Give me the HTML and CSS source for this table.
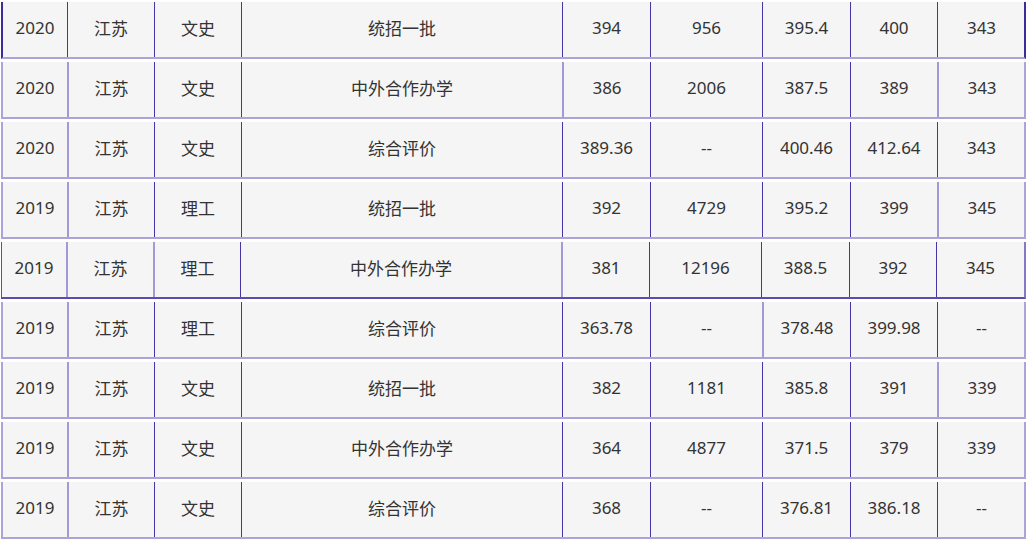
FILE: index.html
```html
<!DOCTYPE html>
<html lang="zh">
<head>
<meta charset="utf-8">
<title>录取分数</title>
<link rel="stylesheet" href="styles.css">
</head>
<body>
<div class="table">
  <div class="row dark-edge">
    <div class="c">2020</div><div class="c">江苏</div><div class="c">文史</div><div class="c">统招一批</div><div class="c">394</div><div class="c">956</div><div class="c">395.4</div><div class="c">400</div><div class="c">343</div>
  </div>
  <div class="row">
    <div class="c">2020</div><div class="c light">江苏</div><div class="c">文史</div><div class="c">中外合作办学</div><div class="c light">386</div><div class="c">2006</div><div class="c">387.5</div><div class="c">389</div><div class="c light">343</div>
  </div>
  <div class="row">
    <div class="c">2020</div><div class="c light">江苏</div><div class="c">文史</div><div class="c">综合评价</div><div class="c">389.36</div><div class="c">--</div><div class="c">400.46</div><div class="c">412.64</div><div class="c">343</div>
  </div>
  <div class="row">
    <div class="c">2019</div><div class="c light">江苏</div><div class="c">理工</div><div class="c">统招一批</div><div class="c">392</div><div class="c">4729</div><div class="c">395.2</div><div class="c">399</div><div class="c light">345</div>
  </div>
  <div class="row thin-edge">
    <div class="c">2019</div><div class="c light">江苏</div><div class="c light">理工</div><div class="c">中外合作办学</div><div class="c light">381</div><div class="c">12196</div><div class="c">388.5</div><div class="c">392</div><div class="c">345</div>
  </div>
  <div class="row">
    <div class="c">2019</div><div class="c light">江苏</div><div class="c">理工</div><div class="c">综合评价</div><div class="c">363.78</div><div class="c">--</div><div class="c light">378.48</div><div class="c">399.98</div><div class="c">--</div>
  </div>
  <div class="row">
    <div class="c">2019</div><div class="c light">江苏</div><div class="c">文史</div><div class="c">统招一批</div><div class="c">382</div><div class="c">1181</div><div class="c">385.8</div><div class="c">391</div><div class="c light">339</div>
  </div>
  <div class="row">
    <div class="c">2019</div><div class="c light">江苏</div><div class="c">文史</div><div class="c">中外合作办学</div><div class="c">364</div><div class="c">4877</div><div class="c">371.5</div><div class="c">379</div><div class="c">339</div>
  </div>
  <div class="row">
    <div class="c">2019</div><div class="c light">江苏</div><div class="c">文史</div><div class="c">综合评价</div><div class="c">368</div><div class="c">--</div><div class="c">376.81</div><div class="c">386.18</div><div class="c">--</div>
  </div>
</div>
</body>
</html>
```

FILE: styles.css
```css
html, body {
  margin: 0;
  padding: 0;
  background: #ffffff;
}

body {
  font-family: "Noto Sans", "Noto Sans CJK SC", sans-serif;
  font-size: 17px;
  color: #333333;
}

.table {
  display: flex;
  flex-direction: column;
  gap: 3px;
  padding: 2px 0 0 1px;
  width: 1025px;
}

.row {
  display: grid;
  grid-template-columns: 64px 87px 87px 321px 88px 112px 88px 87px 88px;
  height: 57px;
  background: #f5f5f5;
  border-left: 2px solid #aca3d8;
  border-right: 2px solid #aca3d8;
  border-bottom: 2px solid #aca3d8;
  box-sizing: border-box;
}

.row.dark-edge {
  border-left: 2px solid #3b2c9c;
  border-right: 2px solid #3b2c9c;
}

.row.thin-edge {
  border-left: 1px solid #5a4cb0;
  border-right: 2px solid #8479c6;
  border-bottom: 2px solid #5a4cb0;
}

.c {
  display: flex;
  align-items: center;
  justify-content: center;
  padding-bottom: 4px;
  border-left: 1px solid #4536a6;
  white-space: nowrap;
}

.c:first-child {
  border-left: none;
}

.c.light {
  border-left: 2px solid #a399d6;
}
```
